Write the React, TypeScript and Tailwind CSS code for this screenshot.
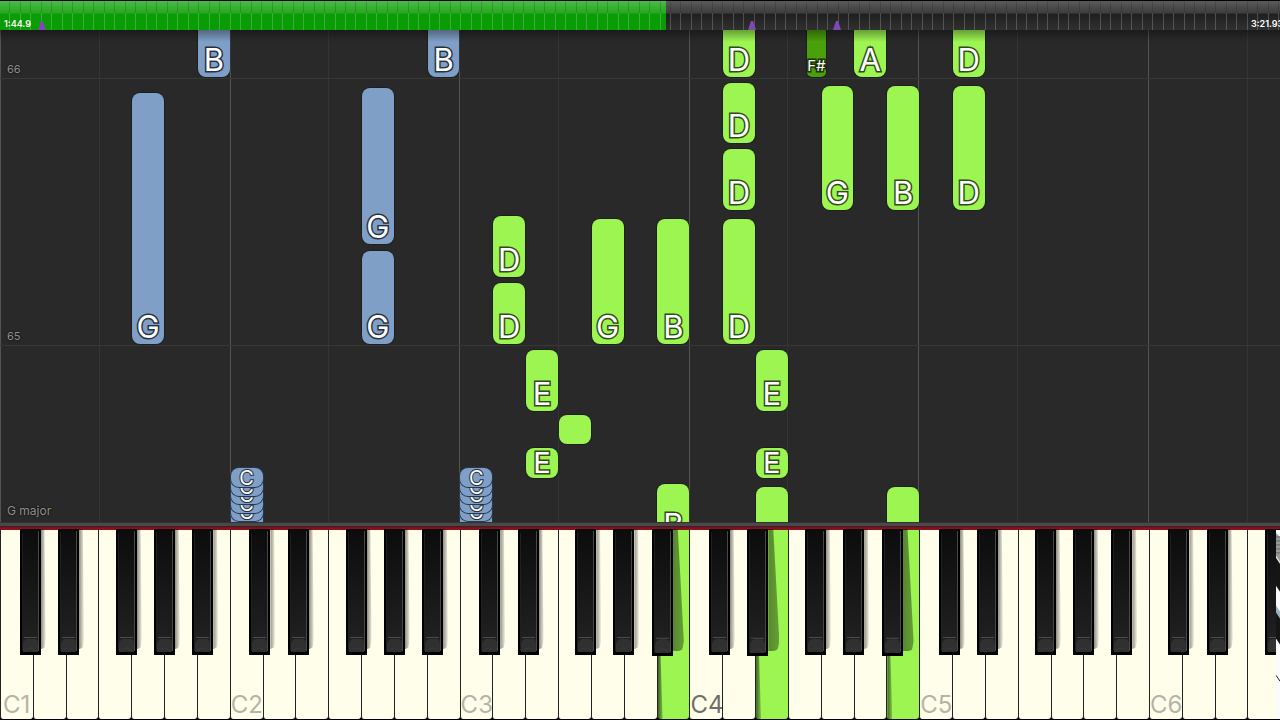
import clsx from 'clsx';

type Hand = 'left' | 'right';

interface Note {
  lane: number;
  start: number;
  length: number;
  hand: Hand;
  label?: string;
}

const LANES = 39;
const MEASURES = 122;
const LETTERS = ['C', 'D', 'E', 'F', 'G', 'A', 'B'];

// where the five black keys of an octave begin, counted in white keys
const BLACK_KEYS = [
  { name: 'C#', offset: 0.6 },
  { name: 'D#', offset: 1.77 },
  { name: 'F#', offset: 3.53 },
  { name: 'G#', offset: 4.69 },
  { name: 'A#', offset: 5.86 },
];

const PRESSED = [20, 23, 27];

// start and length are pixels above the key line
const NOTES: Note[] = [
  { lane: 6, start: 445, length: 60, hand: 'left', label: 'B' },
  { lane: 13, start: 445, length: 60, hand: 'left', label: 'B' },
  { lane: 4, start: 178, length: 251, hand: 'left', label: 'G' },
  { lane: 11, start: 278, length: 156, hand: 'left', label: 'G' },
  { lane: 11, start: 178, length: 93, hand: 'left', label: 'G' },
  { lane: 22, start: 445, length: 60, hand: 'right', label: 'D' },
  { lane: 26, start: 445, length: 60, hand: 'right', label: 'A' },
  { lane: 29, start: 445, length: 60, hand: 'right', label: 'D' },
  { lane: 22, start: 379, length: 60, hand: 'right', label: 'D' },
  { lane: 22, start: 312, length: 61, hand: 'right', label: 'D' },
  { lane: 22, start: 178, length: 125, hand: 'right', label: 'D' },
  { lane: 25, start: 312, length: 124, hand: 'right', label: 'G' },
  { lane: 27, start: 312, length: 124, hand: 'right', label: 'B' },
  { lane: 29, start: 312, length: 124, hand: 'right', label: 'D' },
  { lane: 15, start: 245, length: 61, hand: 'right', label: 'D' },
  { lane: 15, start: 178, length: 61, hand: 'right', label: 'D' },
  { lane: 18, start: 178, length: 125, hand: 'right', label: 'G' },
  { lane: 20, start: 178, length: 125, hand: 'right', label: 'B' },
  { lane: 16, start: 111, length: 61, hand: 'right', label: 'E' },
  { lane: 16, start: 44, length: 30, hand: 'right', label: 'E' },
  { lane: 17, start: 78, length: 29, hand: 'right' },
  { lane: 23, start: 111, length: 61, hand: 'right', label: 'E' },
  { lane: 23, start: 44, length: 30, hand: 'right', label: 'E' },
  { lane: 20, start: -20, length: 58, hand: 'right', label: 'B' },
  { lane: 23, start: -30, length: 65, hand: 'right' },
  { lane: 27, start: -30, length: 65, hand: 'right' },
];

// repeated low C, the latest strike lies on top
const TREMOLO = [-8, 1, 9, 18, 26, 35];

const MARKERS = [3.28, 58.75, 65.4];

const percent = (lanes: number) => `${(lanes / LANES) * 100}%`;

function Timeline() {
  return (
    <header className="relative h-[30px] shrink-0 overflow-hidden border-t border-black bg-[linear-gradient(#5a5a5a,#3e3e3e_40%,#202020_46%,#303030)]">
      <div className="h-full w-[52%] bg-[linear-gradient(#4dba4a,#28a722_40%,#0a9c05_46%,#0a9c05)]" />
      <div className="absolute inset-0 flex">
        {Array.from({ length: MEASURES }, (_, i) => (
          <div key={i} className="flex flex-1 flex-col">
            <div className="h-3 border-r border-black/15" />
            <div className="flex-1 border-r border-white/20" />
          </div>
        ))}
      </div>
      {MARKERS.map((at) => (
        <svg
          key={at}
          viewBox="0 0 8 10"
          className="absolute bottom-0 h-[10px] w-2 -translate-x-1/2 fill-[#8048b4]"
          style={{ left: `${at}%` }}
        >
          <path d="M3 1h2l3 9H0z" />
        </svg>
      ))}
      <span className="absolute bottom-0 left-1 text-[9px] leading-3 font-semibold text-white">1:44.9</span>
      <span className="absolute bottom-0 left-[calc(100%-29px)] text-[9px] leading-3 font-semibold whitespace-nowrap text-white">
        3:21.93
      </span>
      <input
        type="range"
        aria-label="Song position"
        min={0}
        max={202}
        defaultValue={105}
        className="absolute inset-0 h-full w-full cursor-pointer opacity-0"
      />
    </header>
  );
}

function NoteBar({ note }: { note: Note }) {
  return (
    <div
      className="absolute pl-px"
      style={{ left: percent(note.lane), width: percent(1), bottom: note.start, height: note.length }}
    >
      <div
        className={clsx(
          'flex h-full items-end justify-center rounded-[8px] shadow-[0_0_0_1px_rgba(10,15,20,0.4)]',
          note.hand === 'left' ? 'bg-[#7f9fc7]' : 'bg-[#9cf551]',
        )}
      >
        {note.label && (
          <span
            className={clsx(
              'text-white [paint-order:stroke_fill]',
              note.length > 30 ? 'text-[31px] leading-[34px]' : 'text-[29px] leading-[30px]',
              note.hand === 'left'
                ? '[-webkit-text-stroke:3px_#27313d]'
                : '[-webkit-text-stroke:3px_#304a1b]',
            )}
          >
            {note.label}
          </span>
        )}
      </div>
    </div>
  );
}

function TremoloNote({ lane, start }: { lane: number; start: number }) {
  return (
    <div className="absolute h-[19px] pl-px" style={{ left: percent(lane), width: percent(1), bottom: start }}>
      <div className="flex h-full items-center justify-center rounded-[8px] bg-[#7f9fc7] shadow-[0_0_0_1px_#26384f]">
        <span className="text-[20px] leading-5 text-white [-webkit-text-stroke:2px_#27313d] [paint-order:stroke_fill]">
          C
        </span>
      </div>
    </div>
  );
}

function Measure({ number, bottom }: { number: number; bottom: number }) {
  return (
    <div className="absolute inset-x-0 border-b border-[#373737] pb-px pl-[7px]" style={{ bottom }}>
      <span className="block text-[11px] leading-4 text-[#8f8f8f] [text-shadow:0_0_2px_#000]">{number}</span>
    </div>
  );
}

function NoteRoll() {
  return (
    <main className="relative min-h-[492px] flex-1 overflow-hidden bg-[#292929]">
      <div className="absolute inset-0 flex">
        {Array.from({ length: LANES }, (_, i) => (
          <div
            key={i}
            className={clsx('flex-1', {
              'border-l border-[#535353]': i % 7 === 0,
              'border-l border-[#343434]': i % 7 === 3,
            })}
          />
        ))}
      </div>
      <Measure number={66} bottom={443} />
      <Measure number={65} bottom={176} />
      {NOTES.map((note) => (
        <NoteBar key={`${note.lane}:${note.start}`} note={note} />
      ))}
      <div
        className="absolute flex h-[60px] items-end justify-center rounded-[5px] bg-[#4aa00b] shadow-[0_0_0_1px_rgba(10,15,20,0.4)]"
        style={{ left: percent(24.58), width: percent(0.59), bottom: 445 }}
      >
        <span className="text-[15px] leading-[22px] text-white [-webkit-text-stroke:3px_#1c3308] [paint-order:stroke_fill]">
          F#
        </span>
      </div>
      {[7, 14].map((lane) => TREMOLO.map((start) => <TremoloNote key={`${lane}:${start}`} lane={lane} start={start} />))}
      <p className="absolute bottom-0 left-[7px] text-[12px] leading-[22px] text-[#8f8f8f] [text-shadow:0_0_2px_#000]">
        G major
      </p>
      <div className="absolute inset-x-0 top-0 h-3 bg-linear-to-b from-black/35 to-transparent" />
    </main>
  );
}

function WhiteKey({ index }: { index: number }) {
  const octave = Math.floor(index / 7) + 1;
  const letter = LETTERS[index % 7];
  const pressed = PRESSED.includes(index);

  return (
    <button
      type="button"
      aria-label={`${letter}${octave}`}
      className={clsx(
        'flex min-w-0 flex-1 items-end rounded-b-[3px] border-l border-[#222]',
        pressed ? 'bg-[#9cf551]' : 'bg-[#fffeeb]',
      )}
    >
      {letter === 'C' && (
        <span
          className={clsx(
            'text-[24px] leading-7 whitespace-nowrap',
            octave === 4 ? 'text-[#706f67]' : 'text-[#b5b4a7]',
            octave === 1 && 'pl-0.5',
          )}
        >
          {letter}
          {octave}
        </span>
      )}
      {pressed && (
        <span className="h-[65px] w-[5px] bg-linear-to-r from-black/60 to-black/20 [clip-path:polygon(0_0,60%_0,100%_100%,0_100%)]" />
      )}
    </button>
  );
}

function BlackKey({ name, position }: { name: string; position: number }) {
  const besidePressed = PRESSED.includes(Math.ceil(position));

  return (
    <button
      type="button"
      aria-label={name}
      className={clsx('absolute -top-px', besidePressed ? 'h-[127px]' : 'h-[126px]')}
      style={{ left: percent(position), width: percent(0.64) }}
    >
      {besidePressed ? (
        <span className="absolute top-0 left-full h-[122px] w-[11px] rounded-br-md bg-linear-to-r from-black/45 to-black/35 [clip-path:polygon(0_0,45%_0,100%_92%,85%_100%,0_100%)]" />
      ) : (
        <span className="absolute top-0 left-full h-[120px] w-[5px] rounded-br-md bg-linear-to-r from-black/45 to-black/5 [clip-path:polygon(0_0,75%_0,100%_92%,70%_100%,0_100%)]" />
      )}
      <svg viewBox="0 0 21 126" preserveAspectRatio="none" className="relative block h-full w-full">
        <defs>
          <linearGradient id={`body-${name}`} x1="0" y1="0" x2="0" y2="1">
            <stop offset="0" stopColor="#0c0c0c" />
            <stop offset="1" stopColor="#222" />
          </linearGradient>
        </defs>
        <path d="M0 0h21v126H0z" fill="#000" />
        <path d="M2 0h16v122H2z" fill={`url(#body-${name})`} />
        <path d="M2.500 4v118" stroke="#1f1f1f" />
        <path d="M18.500 2v120" stroke="#484848" />
        <path d="M4 108.500h13M7 110.500h8" stroke="#4b4b4b" />
        <path d="M3 123v-8q1-5 5-5h6q4 0 4 5v8z" fill="#303030" />
        <path d="M5 122q5-6 11 0" stroke="#393939" fill="none" />
      </svg>
    </button>
  );
}

function Keyboard() {
  const octaves = Math.ceil(LANES / 7);

  return (
    <section aria-label="Keyboard" className="shrink-0">
      <div className="h-1 border-t border-[#333] bg-[#494949]" />
      <div className="h-1 bg-[linear-gradient(#3d1a20,#7a1522_50%,#98101f)]" />
      <div className="relative flex h-[190px] overflow-x-clip border-b border-black bg-black">
        {Array.from({ length: LANES }, (_, i) => (
          <WhiteKey key={i} index={i} />
        ))}
        {Array.from({ length: octaves }, (_, octave) =>
          BLACK_KEYS.filter((key) => octave * 7 + key.offset < LANES).map((key) => (
            <BlackKey key={`${key.name}${octave + 1}`} name={`${key.name}${octave + 1}`} position={octave * 7 + key.offset} />
          )),
        )}
        {/* slanted sliver of the next panel */}
        <svg viewBox="0 0 4 190" preserveAspectRatio="none" className="absolute top-0 right-0 h-full w-1">
          <path d="M0 0h4v190H0z" fill="#fbfafc" />
          <path d="M0 3l4 4v25l-4-6z" fill="#999" />
          <path d="M0 7h4M0 11h4M0 15h4M0 19h4M0 23h4" stroke="#666" />
          <path d="M0 28l4 6v28l-4-6z" fill="#151515" />
          <path d="M0 76l4 6v8l-4-6z" fill="#9db0c0" />
          <path d="M0 83l4 6v26l-4-6z" fill="#151515" />
          <path d="M0 146l4 6" stroke="#222" />
        </svg>
      </div>
    </section>
  );
}

export default function App() {
  return (
    <div className="flex min-h-screen flex-col overflow-x-hidden bg-[#292929] font-['Inter','Liberation_Sans',sans-serif] [font-optical-sizing:none]">
      <Timeline />
      <NoteRoll />
      <Keyboard />
    </div>
  );
}
